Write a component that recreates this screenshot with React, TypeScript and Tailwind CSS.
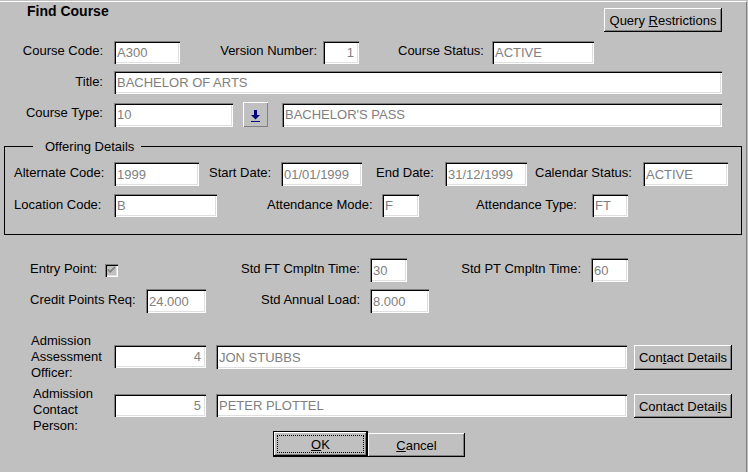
import type { ReactNode } from "react";

const sunken =
  "shadow-[inset_1px_1px_0_#808080,inset_2px_2px_0_#000,inset_-1px_-1px_0_#fff,inset_-2px_-2px_0_#dfdfdf]";
const raised =
  "shadow-[inset_-1px_-1px_0_#000,inset_1px_1px_0_#fff,inset_-2px_-2px_0_#808080]";

interface InputProps {
  value: string;
  className: string;
  right?: boolean;
}

function Input({ value, className, right }: InputProps) {
  return (
    <div
      className={`flex shrink-0 items-center bg-white text-[#808080] ${sunken} ${
        right ? "justify-end pr-[5px]" : "pl-[3px]"
      } ${className}`}
    >
      <span className="whitespace-nowrap leading-[15px]">{value}</span>
    </div>
  );
}

function Label({ children, className }: { children: ReactNode; className: string }) {
  return <span className={`shrink-0 whitespace-nowrap leading-[15px] ${className}`}>{children}</span>;
}

function Button({ children, className }: { children: ReactNode; className: string }) {
  return (
    <button
      type="button"
      className={`flex shrink-0 items-center justify-center bg-[#c0c0c0] leading-[15px] text-black ${raised} ${className}`}
    >
      {children}
    </button>
  );
}

function DownArrow() {
  return (
    <svg width="9" height="12" viewBox="0 0 9 12" fill="#000080">
      <rect x="3" y="0" width="3" height="5" />
      <polygon points="0,5 9,5 4.5,9.5" />
      <rect x="0" y="11" width="9" height="1" />
    </svg>
  );
}

function Checkbox() {
  return (
    <span
      className={`ml-[8px] flex h-[13px] w-[13px] shrink-0 items-center justify-center bg-[#c0c0c0] ${sunken}`}
    >
      <svg width="13" height="13" viewBox="0 0 13 13">
        <path d="M3 5.5 L5.2 7.8 L9.8 3.2" stroke="#808080" strokeWidth="1.8" fill="none" />
      </svg>
    </span>
  );
}

export default function App() {
  return (
    <div className="h-[472px] w-[748px] bg-[#c0c0c0] pr-px pt-px font-['Liberation_Sans',Arial,sans-serif] text-[13px] text-black">
      <div className="h-full border-r border-t border-r-[#808080] border-t-white">
        {/* header */}
        <div className="flex h-[39px] items-start">
          <h1 className="ml-[27px] mt-px text-[14px] font-bold leading-[16px]">Find Course</h1>
          <Button className="ml-auto mr-[24px] mt-[6px] h-[24px] w-[118px]">
            Query&nbsp;<span className="underline">R</span>estrictions
          </Button>
        </div>

        {/* course */}
        <div className="flex h-[23px] items-center">
          <Label className="mb-[4px] w-[103px] text-right">Course Code:</Label>
          <Input className="ml-[11px] h-[23px] w-[66px]" value="A300" />
          <Label className="mb-[4px] w-[137px] text-right">Version Number:</Label>
          <Input className="ml-[6px] h-[23px] w-[36px]" value="1" right />
          <Label className="mb-[4px] w-[125px] text-right">Course Status:</Label>
          <Input className="ml-[8px] h-[23px] w-[102px]" value="ACTIVE" />
        </div>
        <div className="mt-[7px] flex h-[23px] items-center">
          <Label className="mb-[3px] w-[103px] text-right">Title:</Label>
          <Input className="ml-[11px] h-[23px] w-[608px]" value="BACHELOR OF ARTS" />
        </div>
        <div className="mt-[8px] flex h-[25px] items-center">
          <Label className="mb-[4px] w-[103px] text-right">Course Type:</Label>
          <Input className="ml-[11px] h-[24px] w-[119px]" value="10" />
          <button
            type="button"
            className="ml-[10px] flex h-[25px] w-[25px] items-center justify-center pt-[2px] shadow-[inset_1px_1px_0_#fff,inset_-1px_-1px_0_#808080]"
          >
            <DownArrow />
          </button>
          <Input className="ml-[14px] h-[24px] w-[440px]" value="BACHELOR'S PASS" />
        </div>

        {/* offering details */}
        <div className="relative ml-[4px] mt-[19px] h-[89px] w-[738px] border border-black pl-[9px] pt-[15px]">
          <span className="absolute -top-[8px] left-[28px] bg-[#c0c0c0] pl-[12px] pr-[7px] leading-[15px]">
            Offering Details
          </span>
          <div className="flex h-[24px] items-center">
            <Label className="mb-[3px] w-[100px]">Alternate Code:</Label>
            <Input className="h-[24px] w-[85px]" value="1999" />
            <Label className="mb-[3px] ml-[10px] w-[72px]">Start Date:</Label>
            <Input className="h-[24px] w-[81px]" value="01/01/1999" />
            <Label className="mb-[3px] ml-[14px] w-[69px]">End Date:</Label>
            <Input className="h-[24px] w-[82px]" value="31/12/1999" />
            <Label className="mb-[3px] ml-[8px] w-[108px]">Calendar Status:</Label>
            <Input className="h-[24px] w-[85px]" value="ACTIVE" />
          </div>
          <div className="mt-[8px] flex h-[23px] items-center">
            <Label className="mb-[3px] w-[100px]">Location Code:</Label>
            <Input className="h-[23px] w-[103px]" value="B" />
            <Label className="mb-[3px] ml-[50px] w-[115px]">Attendance Mode:</Label>
            <Input className="h-[23px] w-[37px]" value="F" />
            <Label className="mb-[3px] ml-[57px] w-[116px]">Attendance Type:</Label>
            <Input className="h-[23px] w-[36px]" value="FT" />
          </div>
        </div>

        {/* completion */}
        <div className="mt-[23px] flex h-[24px] items-center pl-[30px]">
          <div className="flex w-[340px] items-center">
            <Label className="mb-[4px]">Entry Point:</Label>
            <Checkbox />
            <Label className="mb-[4px] ml-auto pr-[10px]">Std FT Cmpltn Time:</Label>
          </div>
          <Input className="h-[24px] w-[37px]" value="30" />
          <Label className="mb-[4px] w-[184px] pr-[10px] text-right">Std PT Cmpltn Time:</Label>
          <Input className="h-[24px] w-[37px]" value="60" />
        </div>
        <div className="mt-[7px] flex h-[24px] items-center pl-[30px]">
          <Label className="mb-[4px] w-[116px]">Credit Points Req:</Label>
          <Input className="h-[24px] w-[60px]" value="24.000" />
          <Label className="mb-[4px] w-[164px] pr-[10px] text-right">Std Annual Load:</Label>
          <Input className="h-[24px] w-[59px]" value="8.000" />
        </div>

        {/* admission people */}
        <div className="mt-[20px] flex items-start pl-[31px]">
          <div className="w-[83px] shrink-0 leading-[16px]">
            Admission
            <br />
            Assessment
            <br />
            Officer:
          </div>
          <Input className="mt-[12px] h-[23px] w-[92px]" value="4" right />
          <Input className="ml-[10px] mt-[12px] h-[24px] w-[411px]" value="JON STUBBS" />
          <Button className="ml-[7px] mt-[12px] h-[25px] w-[98px]">
            Con<span className="underline">t</span>act Details
          </Button>
        </div>
        <div className="mt-[5px] flex items-start pl-[33px]">
          <div className="w-[81px] shrink-0 leading-[16px]">
            Admission
            <br />
            Contact
            <br />
            Person:
          </div>
          <Input className="mt-[8px] h-[23px] w-[92px]" value="5" right />
          <Input className="ml-[10px] mt-[8px] h-[23px] w-[411px]" value="PETER PLOTTEL" />
          <Button className="ml-[7px] mt-[8px] h-[24px] w-[98px]">
            Contact Detai<span className="underline">l</span>s
          </Button>
        </div>

        {/* dialog buttons */}
        <div className="-mt-[3px] flex items-start pl-[273px]">
          <div className="relative h-[26px] w-[95px] border border-black">
            <Button className="h-full w-full">
              <span className="underline">O</span>K
            </Button>
            <span className="pointer-events-none absolute inset-[3px] border border-dotted border-black" />
          </div>
          <Button className="mt-[2px] h-[24px] w-[97px]">
            <span className="underline">C</span>ancel
          </Button>
        </div>
      </div>
    </div>
  );
}
